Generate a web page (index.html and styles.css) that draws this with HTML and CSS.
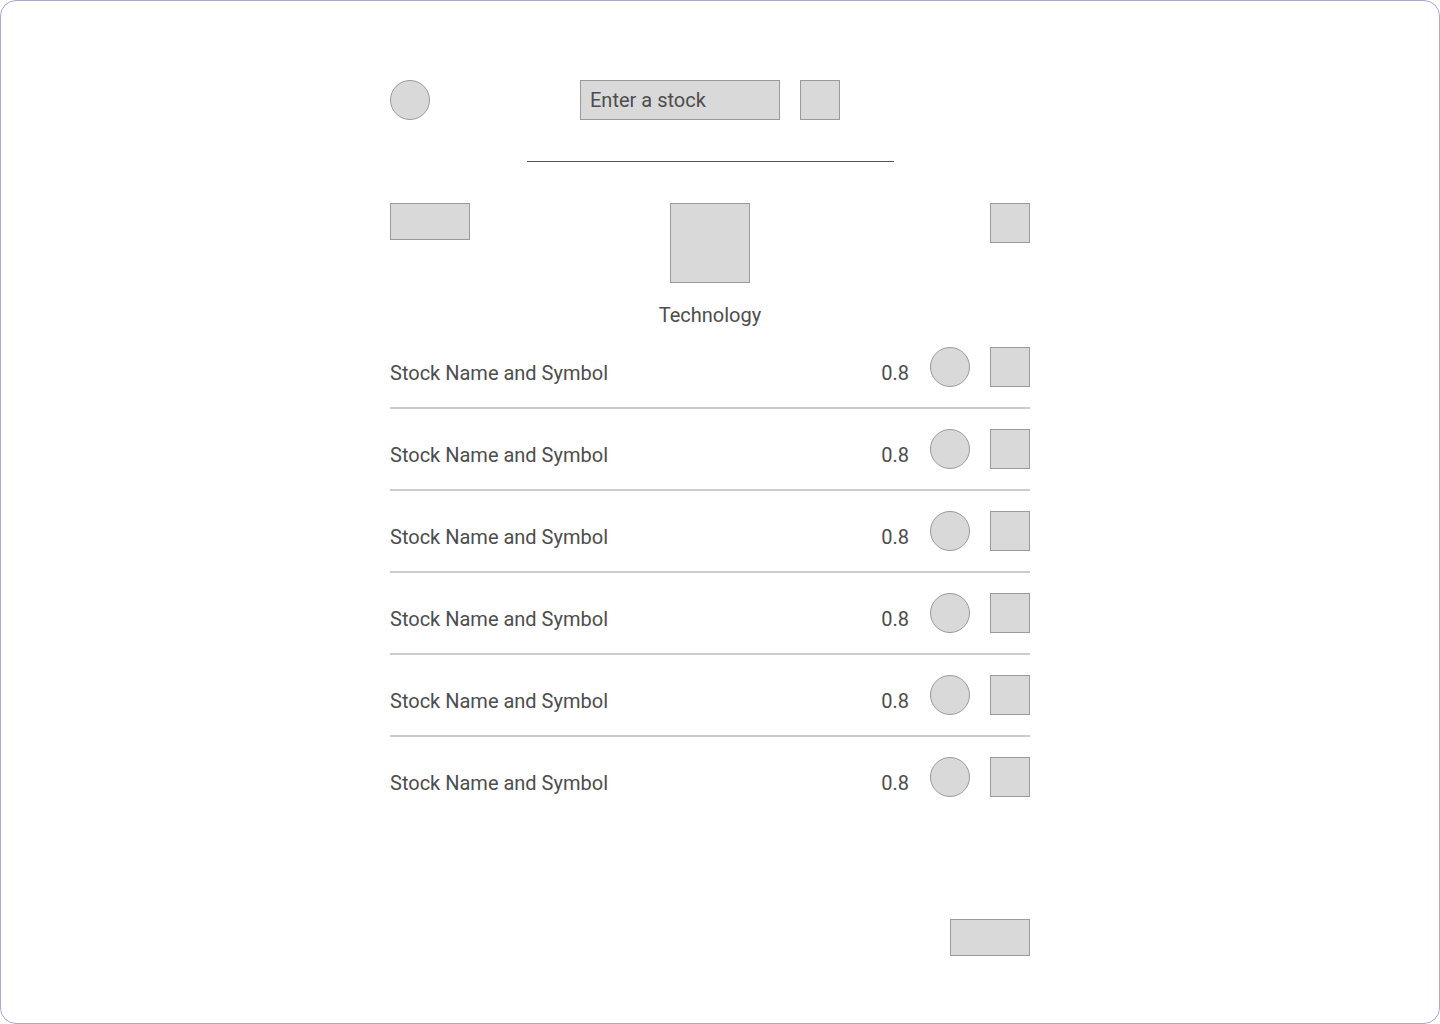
FILE: index.html
```html
<!DOCTYPE html>
<html lang="en">
<head>
<meta charset="utf-8">
<title>Stocks</title>
<link rel="stylesheet" href="styles.css">
</head>
<body>
<div class="frame">
  <div class="column">
    <header class="header">
      <div class="circle"></div>
      <div class="search">Enter a stock</div>
      <div class="sq40"></div>
    </header>
    <div class="rule"></div>
    <section class="sector">
      <div class="btn"></div>
      <div class="logo"></div>
      <div class="sq40 end"></div>
    </section>
    <div class="sector-name">Technology</div>
    <ul class="list">
      <li class="row"><span class="name">Stock Name and Symbol</span><span class="val">0.8</span><div class="circle"></div><div class="sq40"></div></li>
      <li class="row"><span class="name">Stock Name and Symbol</span><span class="val">0.8</span><div class="circle"></div><div class="sq40"></div></li>
      <li class="row"><span class="name">Stock Name and Symbol</span><span class="val">0.8</span><div class="circle"></div><div class="sq40"></div></li>
      <li class="row"><span class="name">Stock Name and Symbol</span><span class="val">0.8</span><div class="circle"></div><div class="sq40"></div></li>
      <li class="row"><span class="name">Stock Name and Symbol</span><span class="val">0.8</span><div class="circle"></div><div class="sq40"></div></li>
      <li class="row"><span class="name">Stock Name and Symbol</span><span class="val">0.8</span><div class="circle"></div><div class="sq40"></div></li>
    </ul>
    <div class="footer">
      <div class="btn"></div>
    </div>
  </div>
</div>
</body>
</html>
```
FILE: styles.css
```css
* { box-sizing: border-box; }
html, body { margin: 0; padding: 0; background: #ffffff; }
body {
  font-family: Roboto, "Liberation Sans", sans-serif;
  color: #4d4d4d;
}
.frame {
  width: 1440px;
  height: 1024px;
  border: 1px solid #aba7c9;
  border-radius: 16px;
  overflow: hidden;
}
.column {
  width: 640px;
  margin-left: 389px;
  padding-top: 79px;
}
.circle {
  width: 40px;
  height: 40px;
  border-radius: 50%;
  background: #d9d9d9;
  border: 1px solid #9a9a9a;
  flex: none;
}
.sq40 {
  width: 40px;
  height: 40px;
  background: #d9d9d9;
  border: 1px solid #9a9a9a;
  flex: none;
}
.header {
  display: flex;
  align-items: center;
  height: 40px;
}
.search {
  width: 200px;
  height: 40px;
  margin-left: 150px;
  margin-right: 20px;
  background: #d9d9d9;
  border: 1px solid #9a9a9a;
  font-size: 20px;
  line-height: 38px;
  padding-left: 9px;
}
.rule {
  width: 367px;
  height: 1px;
  background: #555555;
  margin: 41px 0 0 137px;
}
.sector {
  display: grid;
  grid-template-columns: 1fr auto 1fr;
  align-items: start;
  margin-top: 41px;
}
.sector .end { justify-self: end; }
.btn {
  width: 80px;
  height: 37px;
  background: #d9d9d9;
  border: 1px solid #9a9a9a;
}
.logo {
  width: 80px;
  height: 80px;
  background: #d9d9d9;
  border: 1px solid #9a9a9a;
}
.sector-name {
  text-align: center;
  font-size: 20px;
  line-height: 24px;
  margin-top: 20px;
}
.list {
  list-style: none;
  margin: 0;
  padding: 0;
}
.row {
  display: flex;
  align-items: flex-start;
  padding: 20px 0;
  border-bottom: 2px solid #cccccc;
}
.row:last-child { border-bottom: none; }
.name {
  flex: 1;
  font-size: 20px;
  line-height: 24px;
  margin-top: 14px;
}
.val {
  font-size: 20px;
  line-height: 24px;
  margin-top: 14px;
  margin-right: 21px;
}
.row .circle { margin-right: 20px; }
.footer {
  display: flex;
  justify-content: flex-end;
  margin-top: 102px;
}
```
